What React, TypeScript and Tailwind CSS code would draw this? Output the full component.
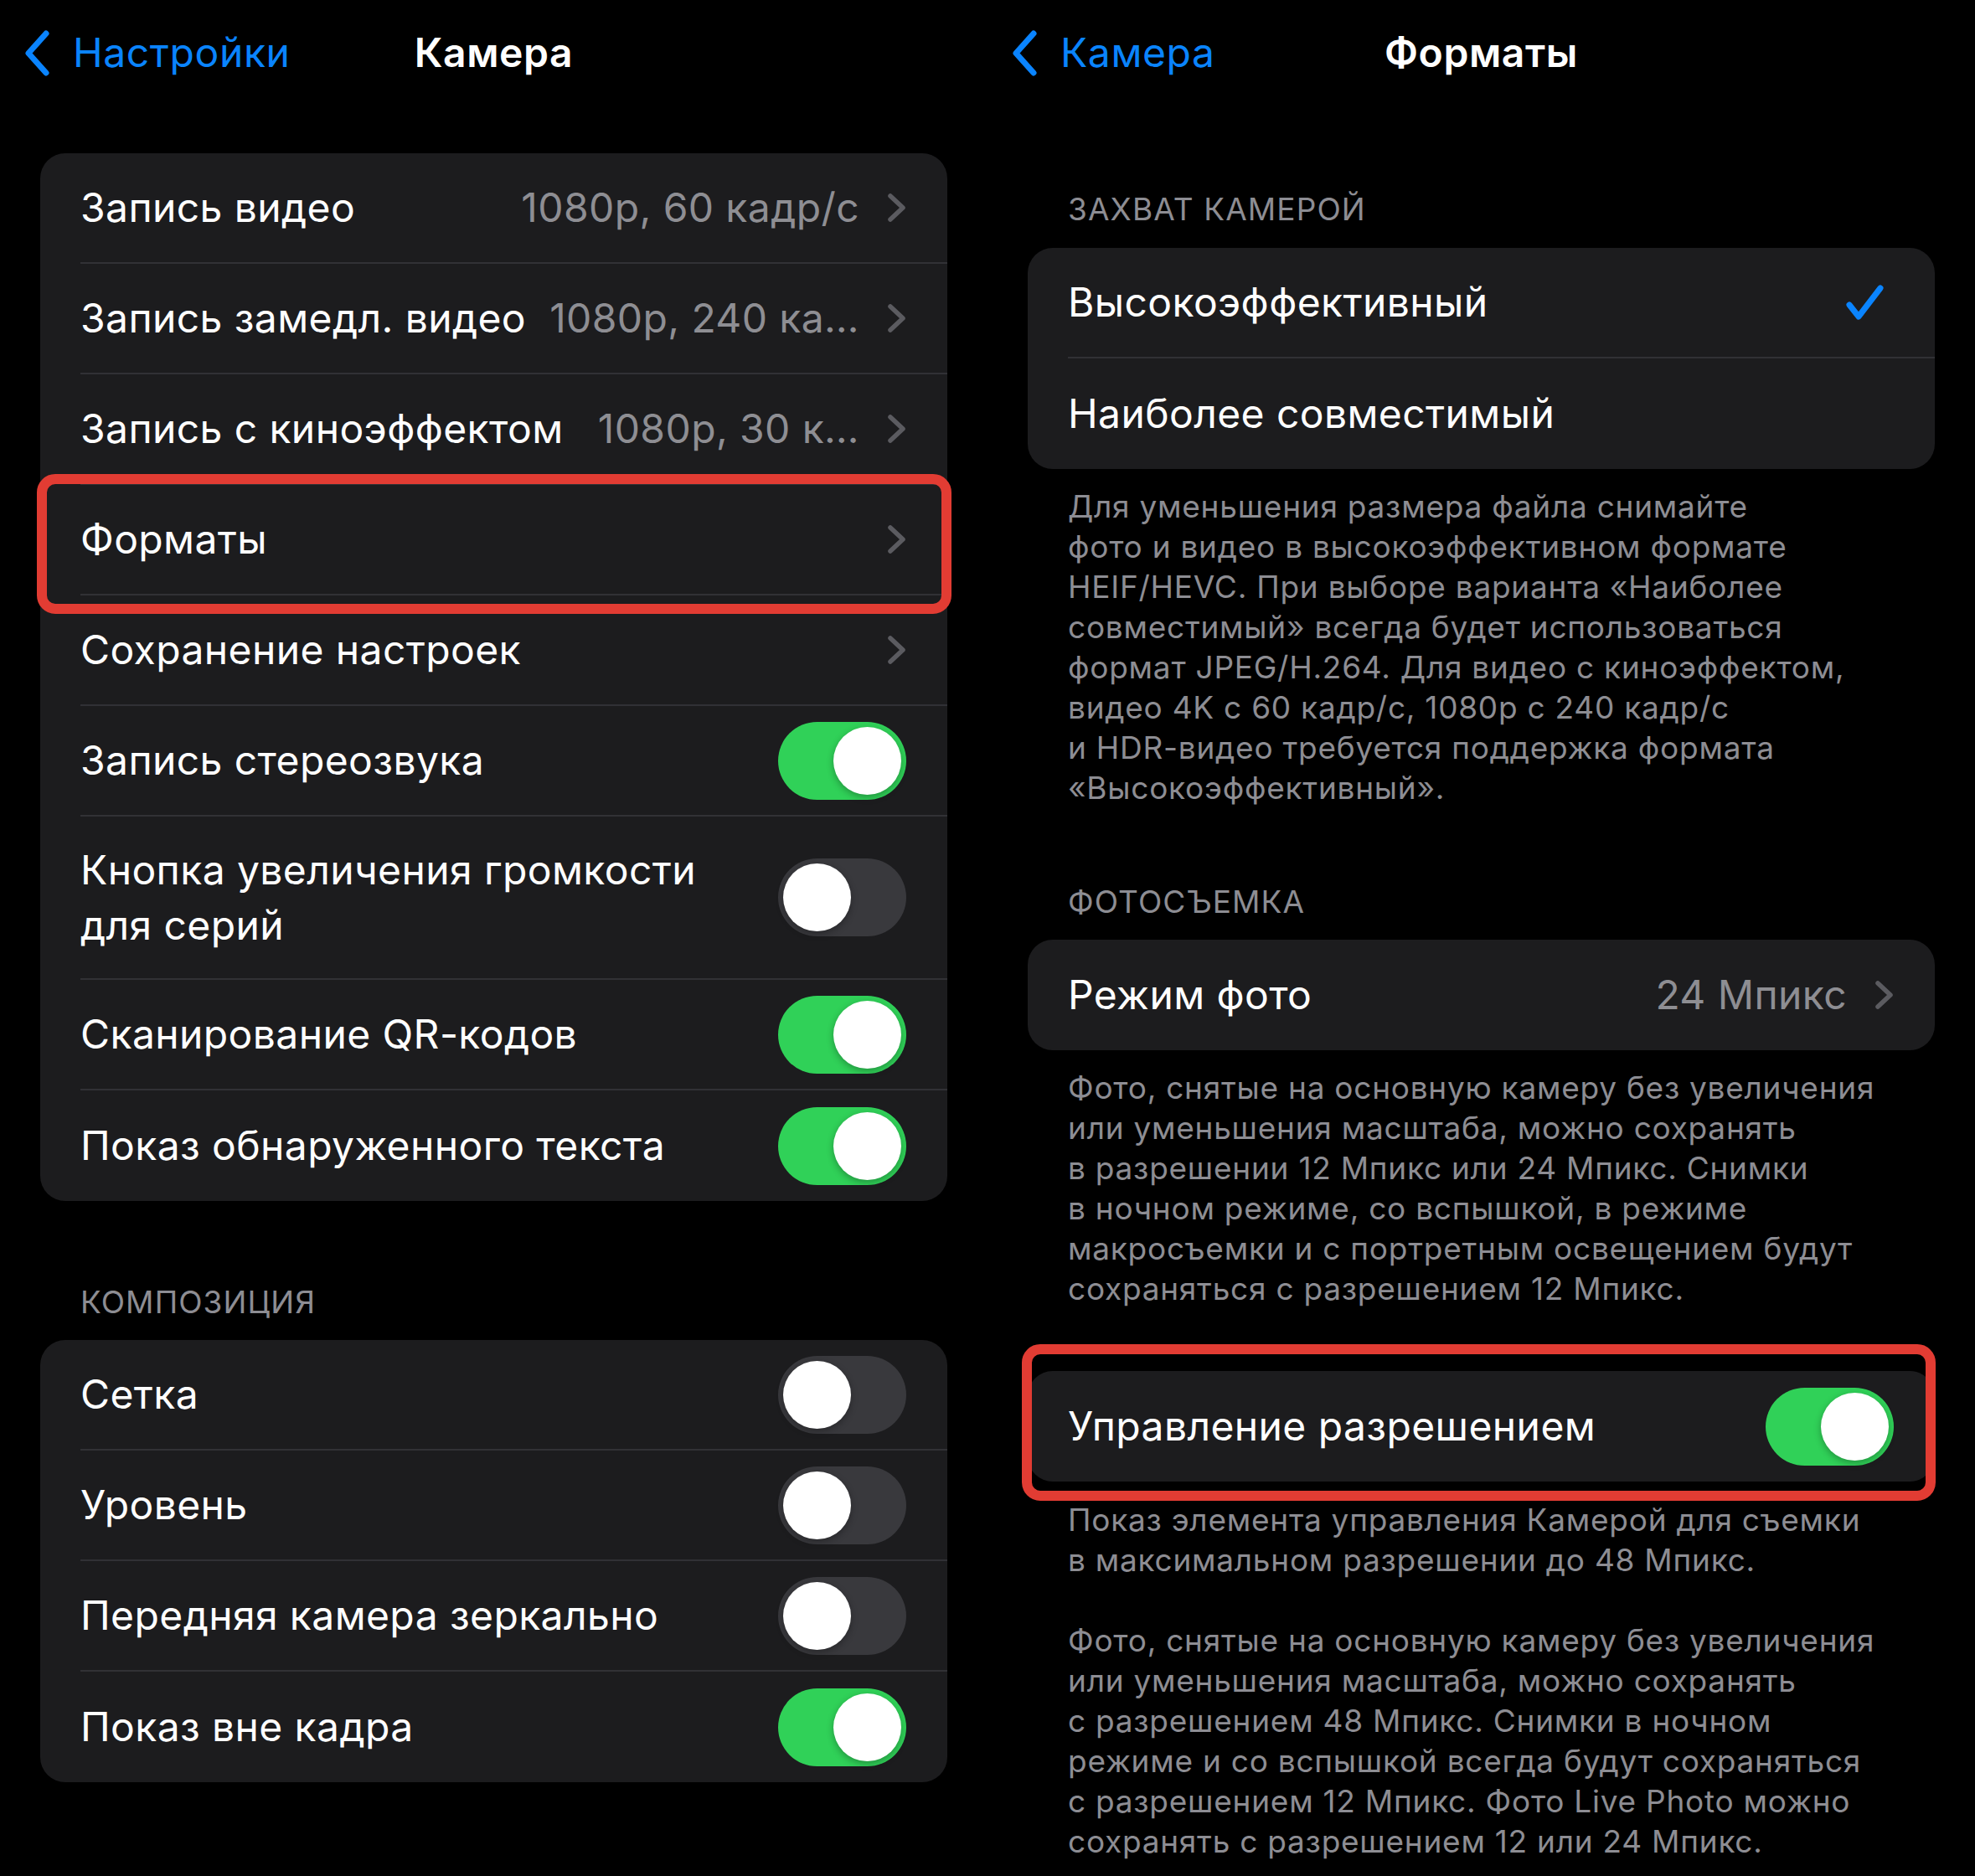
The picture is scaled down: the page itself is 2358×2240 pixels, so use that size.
import React from "react";

const SEP = "border-b-2 border-[#313135]";

function Chevron() {
  return (
    <svg width="23" height="36" viewBox="0 0 23 36" fill="none" className="shrink-0">
      <path
        d="M4 4 L19 18 L4 32"
        stroke="#5b5b60"
        strokeWidth="5.5"
        strokeLinecap="round"
        strokeLinejoin="round"
      />
    </svg>
  );
}

function Check() {
  return (
    <svg width="47" height="44" viewBox="0 0 47 44" fill="none" className="shrink-0">
      <path
        d="M5 25 L16 39 L42 5"
        stroke="#0a84ff"
        strokeWidth="7"
        strokeLinecap="round"
        strokeLinejoin="round"
      />
    </svg>
  );
}

function Toggle({ on }: { on: boolean }) {
  return (
    <div
      className={`flex h-[93px] w-[153px] shrink-0 items-center rounded-full px-[6px] ${
        on ? "justify-end bg-[#30d158]" : "justify-start bg-[#39393d]"
      }`}
    >
      <div className="h-[81px] w-[81px] rounded-full bg-white shadow-[0_3px_8px_rgba(0,0,0,0.3)]" />
    </div>
  );
}

type RowProps = {
  label: React.ReactNode;
  value?: string;
  chevron?: boolean;
  toggle?: "on" | "off";
  check?: boolean;
  last?: boolean;
  tall?: boolean;
  highlight?: boolean;
};

function Row({ label, value, chevron, toggle, check, last, tall, highlight }: RowProps) {
  return (
    <div className="relative flex pl-[48px]">
      <div
        className={`flex min-w-0 flex-1 items-center gap-[33px] ${check ? "pr-[60px]" : "pr-[49px]"} ${
          tall ? "h-[195px]" : "h-[132px]"
        } ${last ? "" : SEP}`}
      >
        <div
          className={`min-w-0 flex-1 whitespace-nowrap text-white ${tall ? "leading-[66px]" : "leading-none"}`}
        >
          {label}
        </div>
        {value ? <span className="shrink-0 whitespace-nowrap leading-none text-[#8e8e93]">{value}</span> : null}
        {chevron ? <Chevron /> : null}
        {toggle ? <Toggle on={toggle === "on"} /> : null}
        {check ? <Check /> : null}
      </div>
      {highlight ? (
        <div className="pointer-events-none absolute bottom-[-22px] left-[-4px] right-[-5px] top-[-13px] z-10 rounded-[22px] border-[12px] border-[#e23c33]" />
      ) : null}
    </div>
  );
}

function Card({ children }: { children: React.ReactNode }) {
  return <div className="rounded-[30px] bg-[#1c1c1e] text-[48px] tracking-[0.4px]">{children}</div>;
}

function Header({ children }: { children: React.ReactNode }) {
  return <div className="px-[48px] text-[37px] leading-[48px] tracking-[1.1px] text-[#8d8d93]">{children}</div>;
}

function Footer({ lines }: { lines: string[] }) {
  return (
    <div className="px-[48px] text-[37px] leading-[48px] tracking-[0.75px] text-[#8d8d93]">
      {lines.map((l, i) => (
        <div key={i} className="h-[48px] whitespace-nowrap">
          {l}
        </div>
      ))}
    </div>
  );
}

function NavBar({ back, title }: { back: string; title: string }) {
  return (
    <div className="grid h-[126px] grid-cols-[1fr_auto_1fr] items-center">
      <div className="flex items-center gap-[27px] pl-[29px] text-[48px] tracking-[0.6px] text-[#0a84ff]">
        <svg width="31" height="55" viewBox="0 0 31 55" fill="none" className="shrink-0">
          <path
            d="M26 4 L5 27.5 L26 51"
            stroke="#0a84ff"
            strokeWidth="7"
            strokeLinecap="round"
            strokeLinejoin="round"
          />
        </svg>
        <span>{back}</span>
      </div>
      <div className="text-[48px] font-semibold tracking-[0.6px] text-white">{title}</div>
      <div />
    </div>
  );
}

function CameraPanel() {
  return (
    <div className="flex w-[1179px] flex-col">
      <NavBar back="Настройки" title="Камера" />
      <div className="mt-[57px] px-[48px]">
        <Card>
          <Row label="Запись видео" value="1080p, 60 кадр/с" chevron />
          <Row label="Запись замедл. видео" value="1080p, 240 ка…" chevron />
          <Row label="Запись с киноэффектом" value="1080p, 30 к…" chevron />
          <Row label="Форматы" chevron highlight />
          <Row label="Сохранение настроек" chevron />
          <Row label="Запись стереозвука" toggle="on" />
          <Row
            label={
              <>
                <div>Кнопка увеличения громкости</div>
                <div>для серий</div>
              </>
            }
            toggle="off"
            tall
          />
          <Row label="Сканирование QR-кодов" toggle="on" />
          <Row label="Показ обнаруженного текста" toggle="on" last />
        </Card>
      </div>
      <div className="mt-[97px] px-[48px]">
        <Header>КОМПОЗИЦИЯ</Header>
        <div className="mt-[21px]">
          <Card>
            <Row label="Сетка" toggle="off" />
            <Row label="Уровень" toggle="off" />
            <Row label="Передняя камера зеркально" toggle="off" />
            <Row label="Показ вне кадра" toggle="on" last />
          </Card>
        </div>
      </div>
    </div>
  );
}

function FormatsPanel() {
  return (
    <div className="flex w-[1179px] flex-col">
      <NavBar back="Камера" title="Форматы" />
      <div className="mt-[100px] px-[48px]">
        <Header>ЗАХВАТ КАМЕРОЙ</Header>
        <div className="mt-[22px]">
          <Card>
            <Row label="Высокоэффективный" check />
            <Row label="Наиболее совместимый" last />
          </Card>
        </div>
        <div className="mt-[21px]">
          <Footer
            lines={[
              "Для уменьшения размера файла снимайте",
              "фото и видео в высокоэффективном формате",
              "HEIF/HEVC. При выборе варианта «Наиболее",
              "совместимый» всегда будет использоваться",
              "формат JPEG/H.264. Для видео с киноэффектом,",
              "видео 4K с 60 кадр/с, 1080p с 240 кадр/с",
              "и HDR-видео требуется поддержка формата",
              "«Высокоэффективный».",
            ]}
          />
        </div>
        <div className="mt-[88px]">
          <Header>ФОТОСЪЕМКА</Header>
        </div>
        <div className="mt-[21px]">
          <Card>
            <Row label="Режим фото" value="24 Мпикс" chevron last />
          </Card>
        </div>
        <div className="mt-[21px]">
          <Footer
            lines={[
              "Фото, снятые на основную камеру без увеличения",
              "или уменьшения масштаба, можно сохранять",
              "в разрешении 12 Мпикс или 24 Мпикс. Снимки",
              "в ночном режиме, со вспышкой, в режиме",
              "макросъемки и с портретным освещением будут",
              "сохраняться с разрешением 12 Мпикс.",
            ]}
          />
        </div>
        <div className="relative mt-[74px]">
          <Card>
            <Row label="Управление разрешением" toggle="on" last />
          </Card>
          <div className="pointer-events-none absolute bottom-[-23px] left-[-7px] right-[-1px] top-[-32px] rounded-[22px] border-[12px] border-[#e23c33]" />
        </div>
        <div className="mt-[22px]">
          <Footer
            lines={[
              "Показ элемента управления Камерой для съемки",
              "в максимальном разрешении до 48 Мпикс.",
              "",
              "Фото, снятые на основную камеру без увеличения",
              "или уменьшения масштаба, можно сохранять",
              "с разрешением 48 Мпикс. Снимки в ночном",
              "режиме и со вспышкой всегда будут сохраняться",
              "с разрешением 12 Мпикс. Фото Live Photo можно",
              "сохранять с разрешением 12 или 24 Мпикс.",
            ]}
          />
        </div>
      </div>
    </div>
  );
}

export default function App() {
  return (
    <div className="flex h-[2240px] w-[2358px] overflow-hidden bg-black font-['Inter',sans-serif] antialiased">
      <CameraPanel />
      <FormatsPanel />
    </div>
  );
}
